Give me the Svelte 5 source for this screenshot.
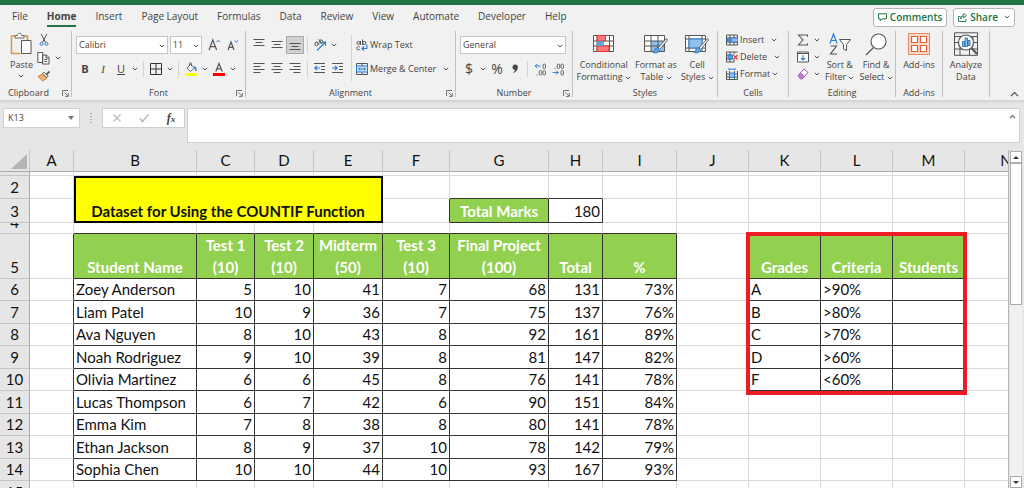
<script lang="ts">
  type Row = { n: number; height: number; cells?: Record<string, string | number> };

  const tabs = [
    'File',
    'Home',
    'Insert',
    'Page Layout',
    'Formulas',
    'Data',
    'Review',
    'View',
    'Automate',
    'Developer',
    'Help',
  ];

  const columns = [
    { id: 'A', width: 44 },
    { id: 'B', width: 123 },
    { id: 'C', width: 58 },
    { id: 'D', width: 59 },
    { id: 'E', width: 69 },
    { id: 'F', width: 67 },
    { id: 'G', width: 99 },
    { id: 'H', width: 54 },
    { id: 'I', width: 74 },
    { id: 'J', width: 72 },
    { id: 'K', width: 72 },
    { id: 'L', width: 72 },
    { id: 'M', width: 72 },
    { id: 'N', width: 0 },
  ];

  const students = [
    ['Zoey Anderson', 5, 10, 41, 7, 68, 131, '73%'],
    ['Liam Patel', 10, 9, 36, 7, 75, 137, '76%'],
    ['Ava Nguyen', 8, 10, 43, 8, 92, 161, '89%'],
    ['Noah Rodriguez', 9, 10, 39, 8, 81, 147, '82%'],
    ['Olivia Martinez', 6, 6, 45, 8, 76, 141, '78%'],
    ['Lucas Thompson', 6, 7, 42, 6, 90, 151, '84%'],
    ['Emma Kim', 7, 8, 38, 8, 80, 141, '78%'],
    ['Ethan Jackson', 8, 9, 37, 10, 78, 142, '79%'],
    ['Sophia Chen', 10, 10, 44, 10, 93, 167, '93%'],
  ];

  const grades = [
    ['A', '>90%'],
    ['B', '>80%'],
    ['C', '>70%'],
    ['D', '>60%'],
    ['F', '<60%'],
  ];

  const rows: Row[] = [
    { n: 1, height: 4 },
    { n: 2, height: 23, cells: { B: 'Dataset for Using the COUNTIF Function' } },
    { n: 3, height: 24, cells: { G: 'Total Marks', H: 180 } },
    { n: 4, height: 11 },
    {
      n: 5,
      height: 45,
      cells: {
        B: 'Student Name',
        C: 'Test 1\n(10)',
        D: 'Test 2\n(10)',
        E: 'Midterm\n(50)',
        F: 'Test 3\n(10)',
        G: 'Final Project\n(100)',
        H: 'Total',
        I: '%',
        K: 'Grades',
        L: 'Criteria',
        M: 'Students',
      },
    },
    ...students.map((student, i) => {
      const cells: Record<string, string | number> = {};
      student.forEach((value, c) => (cells['BCDEFGHI'[c]] = value));
      (grades[i] ?? []).forEach((value, c) => (cells['KL'[c]] = value));
      return { n: 6 + i, height: i % 2 ? 23 : 22, cells };
    }),
    { n: 15, height: 23 },
  ];

  // bordered ranges: G3:H3, B5:I14, K5:M10
  const boxed = (col: string, n: number) =>
    (n === 3 && (col === 'G' || col === 'H')) ||
    (n >= 5 && n <= 14 && col >= 'B' && col <= 'I') ||
    (n >= 5 && n <= 10 && col >= 'K' && col <= 'M');

  const next = (col: string) => String.fromCharCode(col.charCodeAt(0) + 1);
  const merged = (col: string, n: number) => (n === 2 && col >= 'C' && col <= 'E') || (n === 3 && col >= 'B' && col <= 'E');
  const isHead = (col: string, n: number) => boxed(col, n) && (n === 5 || (n === 3 && col === 'G'));
  const isNumber = (col: string, n: number) => boxed(col, n) && !isHead(col, n) && col >= 'C' && col <= 'I';
</script>

{#snippet chev()}
  <svg class="chev" viewBox="0 0 6 4" aria-hidden="true"><path d="M.8.8 3 3 5.2.8" fill="none" stroke="#555" /></svg>
{/snippet}

{#snippet launcher(label: string)}
  <button class="launcher" aria-label={label}>
    <svg width="7" height="7" viewBox="0 0 7 7" fill="none" stroke="#666" stroke-width=".9">
      <path d="M.5 6V.5H6M2.5 2.5l3.5 3.5M6.3 3v3.4H3" />
    </svg>
  </button>
{/snippet}

{#snippet lines(widths: number[], y: number, align: string)}
  <svg width="12" height="14" viewBox="0 0 12 14" stroke="#555" aria-hidden="true">
    {#each widths as w, i}
      {@const x = align === 'left' ? 0.5 : align === 'right' ? 11.5 - w : (12 - w) / 2}
      <path d="M{x} {y + i * 3 + 0.5}h{w}" />
    {/each}
  </svg>
{/snippet}

{#snippet brush()}
  <path d="M22.5 5.5 14 15l1.7 1.5L23.5 7Z" fill="#fff" stroke="#555" stroke-width=".9" />
  <path d="M13.8 15c-2-.4-3 .7-3.2 2.2-.2 1.2-1 1.8-2 2 2.6 1.5 6.600.8 7-2.700Z" fill="#5ba3de" stroke="#2c74b5" stroke-width=".8" />
{/snippet}

<div class="app">
  <div class="titlebar"></div>

  <nav class="tabs" aria-label="Ribbon tabs">
    {#each tabs as tab}
      <button class="tab" class:active={tab === 'Home'}>{tab}</button>
    {/each}
    <div class="actions">
      <button class="pill">
        <svg width="9" height="9" viewBox="0 0 9 9" fill="none" stroke="#217346"><path d="M.5.8h8v5H4L2.200 7.800v-2H.5Z" /></svg>
        Comments
      </button>
      <button class="pill">
        <svg width="9" height="9" viewBox="0 0 9 9" fill="none" stroke="#217346" stroke-width=".9">
          <path d="M2.500 3.500h-2v5h7.500V6M2.800 6c.2-2 1.200-2.800 3-2.800V5L8.500 2.600 5.800.6v1.300C3.800 2 2.800 3.800 2.800 6Z" />
        </svg>
        Share
        <svg class="chev share-chev" viewBox="0 0 6 4"><path d="M.8.8 3 3 5.2.8" fill="none" stroke="#217346" /></svg>
      </button>
    </div>
  </nav>

  <div class="ribbon">
    <section class="group">
      <div class="body clipboard">
        <button class="big">
          <svg width="22" height="24" viewBox="0 0 22 24" fill="none">
            <path d="M6 4H1.500v17.500h9M13 4h4.500v4" stroke="#e0924a" stroke-width="1.500" />
            <path d="M5 6V3.500h2.500C7.500.5 11.500.5 11.500 3.500H14V6Z" fill="#fff" stroke="#666" />
            <path d="M11.500 8.500h9.500v13h-9.500Z" fill="#fff" stroke="#555" />
          </svg>
          <span>Paste</span>
          {@render chev()}
        </button>
        <div class="stack">
          <button class="icon" aria-label="Cut">
            <svg width="12" height="14" viewBox="0 0 12 14" fill="none">
              <path d="M3.200 1 7.500 9.500M8.800 1 4.500 9.500" stroke="#555" />
              <circle cx="3.500" cy="10.800" r="1.500" stroke="#2b7cd3" /><circle cx="8.500" cy="10.800" r="1.500" stroke="#2b7cd3" />
            </svg>
          </button>
          <button class="icon split" aria-label="Copy">
            <svg width="13" height="14" viewBox="0 0 13 14" fill="#fff" stroke="#555">
              <path d="M.8 1.500h5v10h-5ZM5.500 4h4l2.500 2.500v6.500H5.500ZM9 4v3h3M7.300 8.500h3M7.300 10.500h3" />
            </svg>
            {@render chev()}
          </button>
          <button class="icon" aria-label="Format Painter">
            <svg width="14" height="12" viewBox="0 0 14 12">
              <path d="M5.500 4 1 6.500 5.500 11 10 8Z" fill="#f3b36b" stroke="#c76f1e" stroke-width=".8" />
              <path d="m5.500 3.500 1.500-1.200 4.200 3.500L10 7.500Z" fill="#fff" stroke="#555" stroke-width=".9" />
              <path d="M9 4 12 1.200l.8.8L10 5Z" fill="#555" stroke="#555" stroke-width=".6" />
            </svg>
          </button>
        </div>
      </div>
      <footer>Clipboard {@render launcher('Clipboard settings')}</footer>
    </section>

    <section class="group">
      <div class="body rows">
        <div class="line">
          <label class="select font-name">
            <select aria-label="Font name"><option>Calibri</option></select>{@render chev()}
          </label>
          <label class="select font-size">
            <select aria-label="Font size"><option>11</option></select>{@render chev()}
          </label>
          <button class="icon" aria-label="Increase font size">
            <svg width="13" height="14" viewBox="0 0 13 14" fill="none"><path d="m1 12 3.800-10L8.600 12M2.300 8.600h5" stroke="#555" stroke-width="1.200" /><path d="m8.500 4 1.700-1.700L12 4" stroke="#2b7cd3" /></svg>
          </button>
          <button class="icon" aria-label="Decrease font size">
            <svg width="13" height="14" viewBox="0 0 13 14" fill="none"><path d="m2 12 3-8 3 8M3 9.300h4" stroke="#555" stroke-width="1.200" /><path d="m8.500 2.500 1.700 1.700L12 2.500" stroke="#2b7cd3" /></svg>
          </button>
        </div>
        <div class="line">
          <button class="icon"><b>B</b></button>
          <button class="icon italic"><i>I</i></button>
          <button class="icon"><u>U</u></button>
          <button class="arrow" aria-label="Underline styles">{@render chev()}</button>
          <span class="rule"></span>
          <button class="icon" aria-label="Borders">
            <svg width="12" height="12" viewBox="0 0 12 12" fill="none" stroke="#333"><path d="M.5.5h11v11H.5ZM6 .5v11M.5 6h11" /></svg>
          </button>
          <button class="arrow" aria-label="Border styles">{@render chev()}</button>
          <span class="rule"></span>
          <button class="icon" aria-label="Fill colour">
            <svg width="14" height="14" viewBox="0 0 14 14" fill="none">
              <path d="M6.500 2.200 10.500 6 6.500 9.500 3 6.200ZM5.500 3.500V1.500c0-1 2-1 2 0V4" stroke="#555" stroke-width=".9" />
              <path d="M10 5c1.800.5 2 2.500 1.700 3.800" stroke="#2b7cd3" stroke-width="1.500" />
              <path d="M1 11h12v3H1Z" fill="#ff0" />
            </svg>
          </button>
          <button class="arrow" aria-label="Fill colours">{@render chev()}</button>
          <button class="icon" aria-label="Font colour">
            <svg width="14" height="14" viewBox="0 0 14 14" fill="none"><path d="m3.800 9.500 3.200-8 3.200 8M5 6.800h4" stroke="#555" stroke-width="1.200" /><path d="M1 11h12v3H1Z" fill="#f00" /></svg>
          </button>
          <button class="arrow" aria-label="Font colours">{@render chev()}</button>
        </div>
      </div>
      <footer>Font {@render launcher('Font settings')}</footer>
    </section>

    <section class="group">
      <div class="body alignment">
        <div class="rows">
          <div class="line">
            <button class="icon" aria-label="Top align">{@render lines([11, 7, 11], 1, 'center')}</button>
            <button class="icon" aria-label="Middle align">{@render lines([11, 7, 11], 3, 'center')}</button>
            <button class="icon pressed" aria-label="Bottom align">{@render lines([11, 7, 11], 5, 'center')}</button>
            <span class="rule"></span>
            <button class="icon" aria-label="Orientation">
              <svg width="14" height="14" viewBox="0 0 14 14" fill="none">
                <circle cx="3.500" cy="6" r="1.700" stroke="#555" /><path d="m3.800 3.500 2.500 3.200M5.500 1.200l3.500 4.500" stroke="#555" /><circle cx="8" cy="3.500" r="1.600" stroke="#555" />
                <path d="m4 12.500 8-8M9 4.200h3.500v3.500" stroke="#2b7cd3" stroke-width="1.200" />
              </svg>
            </button>
            <button class="arrow" aria-label="Orientations">{@render chev()}</button>
          </div>
          <div class="line">
            <button class="icon" aria-label="Align left">{@render lines([11, 7, 11, 7], 1, 'left')}</button>
            <button class="icon" aria-label="Centre">{@render lines([11, 7, 11, 7], 1, 'center')}</button>
            <button class="icon" aria-label="Align right">{@render lines([11, 7, 11, 7], 1, 'right')}</button>
            <span class="rule"></span>
            <button class="icon" aria-label="Decrease indent">
              <svg width="12" height="14" viewBox="0 0 12 14" fill="none"><path d="M0 1.500h11M7 4.500h4M7 7.500h4M0 10.500h11" stroke="#555" /><path d="M6 6H.8M3 3.800.8 6 3 8.200" stroke="#2b7cd3" stroke-width="1.200" /></svg>
            </button>
            <button class="icon" aria-label="Increase indent">
              <svg width="12" height="14" viewBox="0 0 12 14" fill="none"><path d="M0 1.500h11M7 4.500h4M7 7.500h4M0 10.500h11" stroke="#555" /><path d="M0 6h5.200M3 3.800 5.200 6 3 8.200" stroke="#2b7cd3" stroke-width="1.200" /></svg>
            </button>
          </div>
        </div>
        <span class="rule tall"></span>
        <div class="rows">
          <button class="row-button">
            <svg width="12" height="12" viewBox="0 0 12 12" fill="none">
              <circle cx="2.500" cy="4" r="1.500" stroke="#555" /><path d="M4.500 2v4M6.500.5V6M3.800 8C2 7 .8 8 .8 9.300s1.500 2.200 3 1.200" stroke="#555" /><circle cx="8.300" cy="4" r="1.600" stroke="#555" />
              <path d="M10.800 5.500v4H6M8 7.500l-2 2 2 2" stroke="#2b7cd3" stroke-width="1.200" />
            </svg>
            Wrap Text
          </button>
          <button class="row-button">
            <svg width="12" height="12" viewBox="0 0 12 12" fill="none">
              <path d="M.5.5h11v11H.5ZM6 .5v2.500M6 9v2.500" stroke="#555" /><path d="M.5 3h11v6H.5Z" fill="#cfe4f6" stroke="#2b7cd3" />
              <path d="M2.500 6h7M4 4.500 2.500 6 4 7.500M8 4.500 9.500 6 8 7.500" stroke="#2b7cd3" />
            </svg>
            Merge &amp; Center
            <span class="far">{@render chev()}</span>
          </button>
        </div>
      </div>
      <footer>Alignment {@render launcher('Alignment settings')}</footer>
    </section>

    <section class="group">
      <div class="body rows">
        <div class="line">
          <label class="select number-format">
            <select aria-label="Number format"><option>General</option></select>{@render chev()}
          </label>
        </div>
        <div class="line symbols">
          <button class="icon">$</button>
          <button class="arrow" aria-label="Currencies">{@render chev()}</button>
          <button class="icon">%</button>
          <button class="icon" aria-label="Comma style">
            <svg width="8" height="12" viewBox="0 0 8 12"><path d="M4 1.500c2 0 3 1.200 2.800 3.200C6.600 7.500 4.500 9.500 1.800 10c1.600-1.300 2.200-2.200 2.200-3.300C2.300 6.800 1.500 5.500 1.500 4.200S2.500 1.500 4 1.500Z" fill="#444" /></svg>
          </button>
          <span class="rule"></span>
          <button class="icon" aria-label="Increase decimal">
            <svg width="13" height="13" viewBox="0 0 13 13" fill="none">
              <path d="M6.500 3H1.200M3.200 1l-2 2 2 2" stroke="#2b7cd3" /><g stroke="#555" stroke-width=".9"><rect x="9" y="1" width="2.500" height="4.500" rx="1.200" /><rect x="5.200" y="7.500" width="2.500" height="4.500" rx="1.200" /><rect x="9" y="7.500" width="2.500" height="4.500" rx="1.200" /><path d="M2.500 12h1" /></g>
            </svg>
          </button>
          <button class="icon" aria-label="Decrease decimal">
            <svg width="13" height="13" viewBox="0 0 13 13" fill="none">
              <path d="M.8 9.500h5.400m-2-2 2 2-2 2" stroke="#2b7cd3" /><g stroke="#555" stroke-width=".9"><rect x="5.200" y="1" width="2.500" height="4.500" rx="1.200" /><rect x="9" y="1" width="2.500" height="4.500" rx="1.200" /><rect x="9" y="7.500" width="2.500" height="4.500" rx="1.200" /><path d="M2.500 5.500h1" /></g>
            </svg>
          </button>
        </div>
      </div>
      <footer>Number {@render launcher('Number settings')}</footer>
    </section>

    <section class="group">
      <div class="body bigs">
        <button class="big">
          <svg width="24" height="22" viewBox="0 0 24 22" fill="none">
            <path d="M1.500 2.500h20v16h-20Z" fill="#fff" /><path d="M1.500 2.500h20v16h-20ZM1.500 8h20M1.500 13h20M5 2.500v16M11 2.500v16M17.500 2.500v16" stroke="#555" />
            <path d="M5 2.500h8.500V8H5ZM5 13h12v5.500H5Z" fill="#f77" stroke="#e33" /><path d="M5 8h6v5H5Z" fill="#5ba3de" />
          </svg>
          <span>Conditional<br />Formatting {@render chev()}</span>
        </button>
        <button class="big">
          <svg width="24" height="22" viewBox="0 0 24 22" fill="none">
            <path d="M.5 2.500h20v16H.5Z" fill="#fff" /><path d="M7 8h13.500v10.500H7Z" fill="#8fc0ea" />
            <path d="M.5 2.500h20v16H.5ZM.5 8h20M.5 13h20M7 2.500v16M14 2.500v16" stroke="#555" />
            {@render brush()}
          </svg>
          <span>Format as<br />Table {@render chev()}</span>
        </button>
        <button class="big">
          <svg width="24" height="22" viewBox="0 0 24 22" fill="none">
            <path d="M.5 2.500h20v16H.5Z" fill="#fff" /><path d="M.5 2.500h20v16H.5ZM.5 6h20M.5 15h20M4 2.500v16M17 2.500v16" stroke="#555" />
            <path d="M4 6h13v9H4Z" fill="#8fc0ea" stroke="#2b7cd3" />
            {@render brush()}
          </svg>
          <span>Cell<br />Styles {@render chev()}</span>
        </button>
      </div>
      <footer>Styles</footer>
    </section>

    <section class="group">
      <div class="body cells">
        <button class="row-button">
          <svg width="12" height="12" viewBox="0 0 12 12" fill="none"><path d="M.5 1v10h11V1ZM.5 4h11M.5 8h11M4 1v10M8 1v10" stroke="#555" /><path d="M4.500 4H12v4H4.500Z" fill="#8fc0ea" stroke="#2b7cd3" /><path d="M6 6H1M3 4 1 6l2 2" stroke="#2b7cd3" stroke-width="1.200" /></svg>
          Insert <span class="far">{@render chev()}</span>
        </button>
        <button class="row-button">
          <svg width="12" height="12" viewBox="0 0 12 12" fill="none"><path d="M.5 1v10h8M.5 1h11M.5 4h6M.5 8h6M4 1v10M8 1v2M8 9v2" stroke="#555" /><path d="M2 4h4.500v4H2Z" fill="#5ba3de" stroke="#2b7cd3" /><path d="m7.500 4 4 4.500M11.500 4l-4 4.500" stroke="#e33" stroke-width="1.200" /></svg>
          Delete <span class="far">{@render chev()}</span>
        </button>
        <button class="row-button">
          <svg width="12" height="12" viewBox="0 0 12 12" fill="none"><path d="M.5 3v8.500h11V3M.5 6h11M.5 9h11M3.500 3v8.500M8.500 3v8.500" stroke="#555" /><path d="M3.500 5h5v4.500h-5Z" fill="#8fc0ea" stroke="#2b7cd3" /><path d="M3 .2v2M9 .2v2M3 1.200h6" stroke="#2b7cd3" /></svg>
          Format {@render chev()}
        </button>
      </div>
      <footer>Cells</footer>
    </section>

    <section class="group">
      <div class="body editing">
        <div class="cells">
          <button class="row-button" aria-label="AutoSum">
            <svg width="12" height="12" viewBox="0 0 12 12" fill="none"><path d="M10.500 2.800V1H1.500l4.500 5-4.500 5h9V9.200" stroke="#555" stroke-width="1.100" /></svg>
            {@render chev()}
          </button>
          <button class="row-button" aria-label="Fill">
            <svg width="12" height="12" viewBox="0 0 12 12" fill="none"><path d="M.5 1h11v10H.5Z" fill="#fff" stroke="#555" /><path d="M.5 2.500h11" stroke="#555" /><path d="M6 4v5M4 7l2 2 2-2" stroke="#2b7cd3" stroke-width="1.100" /></svg>
            {@render chev()}
          </button>
          <button class="row-button" aria-label="Clear">
            <svg width="12" height="12" viewBox="0 0 12 12" fill="none"><path d="m1 7.500 6-6.500 4 3.500L5.200 11H3.500Z" fill="#fff" stroke="#a24fb5" /><path d="m1 7.500 2.700-3 4 3.700L5.200 11H3.500Z" fill="#b878c8" /></svg>
            {@render chev()}
          </button>
        </div>
        <button class="big">
          <svg width="24" height="24" viewBox="0 0 24 24" fill="none">
            <path d="M2 11.500 5.500 2 9 11.500M3.200 8.500h4.600" stroke="#2b7cd3" stroke-width="1.200" /><path d="M2.500 14h6l-6 8h6.500" stroke="#555" stroke-width="1.200" />
            <path d="M11.500 7.500h11L18.500 12.500v6l-3-1.500v-4.500Z" fill="#fff" stroke="#555" />
          </svg>
          <span>Sort &amp;<br />Filter {@render chev()}</span>
        </button>
        <button class="big">
          <svg width="24" height="24" viewBox="0 0 24 24" fill="none"><circle cx="14.500" cy="9.500" r="7.500" fill="#fff" stroke="#555" stroke-width="1.100" /><path d="m9.500 15.500-7.500 7.500" stroke="#555" stroke-width="1.300" /></svg>
          <span>Find &amp;<br />Select {@render chev()}</span>
        </button>
      </div>
      <footer>Editing</footer>
    </section>

    <section class="group">
      <div class="body bigs">
        <button class="big">
          <svg width="24" height="24" viewBox="0 0 24 24" fill="none"><path d="M1.500 1.500h21v21h-21Z" fill="#fbd9c8" stroke="#e08a64" /><path d="M4.500 4.500h6v6h-6ZM13.500 4.500h6v6h-6ZM4.500 13.500h6v6h-6ZM13.500 13.500h6v6h-6Z" fill="#fff" stroke="#d9643a" stroke-width="1.200" /></svg>
          <span>Add-ins</span>
        </button>
      </div>
      <footer>Add-ins</footer>
    </section>

    <section class="group">
      <div class="body bigs">
        <button class="big">
          <svg width="24" height="24" viewBox="0 0 24 24" fill="none">
            <path d="M.5.8h23v22.500H.5ZM.5 4.500h23M.5 10.500h23M.5 17h23M6 4.500v19M15.500 17v6.500M19 4.500v6" stroke="#555" />
            <circle cx="12" cy="10.500" r="7.500" fill="#fff" stroke="#555" stroke-width="1.200" />
            <path d="M8.500 9.500h2v5h-2ZM11 6h2.500v8.500H11ZM14 8.500h2v5h-2Z" fill="#8fc0ea" stroke="#2b6fb0" stroke-width=".9" />
            <path d="m17.500 16 5.500 6" stroke="#555" stroke-width="2" />
          </svg>
          <span>Analyze<br />Data</span>
        </button>
      </div>
      <footer></footer>
    </section>

    <button class="collapse" aria-label="Collapse ribbon">
      <svg width="9" height="6" viewBox="0 0 9 6"><path d="m1 5 3.500-3.500L8 5" fill="none" stroke="#555" stroke-width="1.200" /></svg>
    </button>
  </div>

  <div class="formula-bar">
    <div class="name-box">
      <input aria-label="Name box" value="K13" />
      <svg width="6" height="4" viewBox="0 0 6 4"><path d="M0 0h6L3 4Z" fill="#777" /></svg>
    </div>
    <svg class="dots" width="2" height="10" viewBox="0 0 2 10" fill="#aaa"><path d="M0 0h2v1H0ZM0 3h2v1H0ZM0 6h2v1H0ZM0 9h2v1H0Z" /></svg>
    <div class="fx">
      <button aria-label="Cancel"><svg width="10" height="10" viewBox="0 0 10 10"><path d="m1.500 1.500 7 7M8.500 1.500l-7 7" stroke="#bbb" stroke-width="1.300" /></svg></button>
      <button aria-label="Enter"><svg width="10" height="10" viewBox="0 0 10 10"><path d="m.8 5.500 2.700 3L9.500 1.500" fill="none" stroke="#bbb" stroke-width="1.500" /></svg></button>
      <button aria-label="Insert function"><i>f</i><i class="small">x</i></button>
    </div>
    <div class="formula">
      <input aria-label="Formula" />
      <svg width="7" height="5" viewBox="0 0 7 5"><path d="m1 4 2.500-2.500L6 4" fill="none" stroke="#777" stroke-width="1.300" /></svg>
    </div>
  </div>

  <main class="sheet">
    <div class="viewport">
      <table>
        <colgroup>
          <col class="row-col" />
          {#each columns as col}
            <col style={col.width ? `width: ${col.width}px` : undefined} />
          {/each}
        </colgroup>
        <thead>
          <tr>
            <th class="corner" aria-label="Select all"><svg width="16" height="15" viewBox="0 0 16 15"><path d="M16 0v15H0Z" fill="#b4b4b4" /></svg></th>
            {#each columns as col}
              <th scope="col">{col.id}</th>
            {/each}
          </tr>
        </thead>
        <tbody>
          {#each rows as row}
            <tr style={`--h: ${row.height - 1}px`}>
              <th scope="row"><div class="cell">{row.n > 1 ? row.n : ''}</div></th>
              {#each columns as { id }}
                {#if id === 'B' && row.n === 2}
                  <td class="title" colspan="4" rowspan="2">{row.cells?.B}</td>
                {:else if !merged(id, row.n)}
                  <td
                    class:dark-right={boxed(id, row.n) || boxed(next(id), row.n)}
                    class:dark-bottom={boxed(id, row.n) || boxed(id, row.n + 1)}
                    class:head={isHead(id, row.n)}
                    class:number={isNumber(id, row.n)}
                    class:anchor={id === 'K' && row.n === 5}
                  >
                    <div class="cell">{row.cells?.[id] ?? ''}</div>
                    {#if id === 'K' && row.n === 5}
                      <div class="highlight"></div>
                    {/if}
                  </td>
                {/if}
              {/each}
            </tr>
          {/each}
        </tbody>
      </table>
    </div>
    <div class="scrollbar">
      <button aria-label="Scroll up"><svg width="6" height="3" viewBox="0 0 6 3"><path d="M0 3h6L3 0Z" fill="#333" /></svg></button>
      <div class="thumb"></div>
      <div class="track"></div>
      <button aria-label="Scroll down"><svg width="6" height="3" viewBox="0 0 6 3"><path d="M0 0h6L3 3Z" fill="#333" /></svg></button>
    </div>
  </main>
</div>

<style>
  :global(body) {
    overflow: hidden;
  }

  .app {
    display: flex;
    flex-direction: column;
    height: 100vh;
    background: #e6e6e6;
    color: #444;
    font-family: 'Open Sans', 'Noto Sans', sans-serif;
    font-size: 9px;
    line-height: 12px;
  }

  .app * {
    box-sizing: border-box;
  }

  svg {
    display: block;
    flex: none;
  }

  button,
  input,
  select {
    margin: 0;
    padding: 0;
    border: 0;
    border-radius: 0;
    background: none;
    color: inherit;
    font: inherit;
    white-space: nowrap;
  }

  .chev {
    width: 6px;
    height: 4px;
  }

  .titlebar {
    flex: none;
    height: 5px;
    background: #217346;
  }

  /* tabs */
  .tabs {
    display: flex;
    flex: none;
    align-items: center;
    height: 24px;
    padding: 0 9px 0 12px;
    gap: 19px;
    background: #f1f1f1;
    font-size: 10px;
  }

  .tab {
    height: 20px;
    border-bottom: 2px solid transparent;
  }

  .tab.active {
    border-color: #217346;
    font-weight: 700;
  }

  .actions {
    display: flex;
    gap: 6px;
    margin-left: auto;
  }

  .pill {
    display: flex;
    align-items: center;
    gap: 3px;
    height: 19px;
    padding: 0 4px;
    border: 1px solid #b5b5b5;
    border-radius: 3px;
    background: #fff;
    color: #217346;
    font-weight: 600;
  }

  .share-chev {
    margin-left: 3px;
  }

  /* ribbon */
  .ribbon {
    display: grid;
    flex: none;
    grid-template-columns: 72px 174px 210px 117px 145px 71px 107px 47px 47px 1fr;
    height: 71px;
    background: #f1f1f1;
  }

  .group {
    display: flex;
    flex-direction: column;
    margin: 2px 0 3px;
    border-right: 1px solid #c0c0c0;
  }

  .body {
    flex: 1;
  }

  footer {
    position: relative;
    height: 12px;
    margin-bottom: -2px;
    text-align: center;
  }

  .group:first-child footer {
    padding-right: 14px;
  }

  .launcher {
    position: absolute;
    right: 2px;
    top: 3px;
  }

  .clipboard {
    display: flex;
    gap: 4px;
    padding-left: 10px;
  }

  .stack {
    display: flex;
    flex-direction: column;
    justify-content: space-between;
    padding: 1px 0 3px;
    align-items: flex-start;
  }

  .big {
    display: flex;
    flex-direction: column;
    align-items: center;
    justify-content: flex-start;
    gap: 3px;
    text-align: center;
  }

  .big span .chev {
    display: inline-block;
    vertical-align: middle;
  }

  .clipboard .big {
    padding-top: 1px;
  }

  .bigs {
    display: flex;
    justify-content: center;
    gap: 4px;
    padding-top: 1px;
  }

  .bigs .big > svg,
  .editing .big > svg {
    height: 24px;
  }

  .rows {
    display: flex;
    flex-direction: column;
    gap: 6px;
    padding: 5px 4px 0;
  }

  .line {
    display: flex;
    align-items: center;
    height: 18px;
  }

  .icon {
    display: flex;
    align-items: center;
    justify-content: center;
    width: 18px;
    height: 18px;
    font-size: 11px;
  }

  .icon.split {
    gap: 5px;
  }

  .italic {
    font-family: 'Liberation Serif', serif;
  }

  .stack .icon {
    width: auto;
    min-width: 14px;
    height: 16px;
  }

  .icon.pressed {
    border: 1px solid #aaa;
    background: #d2d0ce;
  }

  .arrow {
    display: flex;
    align-items: center;
    justify-content: center;
    width: 10px;
    height: 18px;
  }

  .rule {
    width: 1px;
    height: 16px;
    margin: 0 3px;
    background: #d2d2d2;
  }

  .rule.tall {
    height: 46px;
    margin: 4px 0 0;
  }

  .select {
    position: relative;
    height: 18px;
    border: 1px solid #c6c6c6;
    background: #fff;
  }

  .select select {
    width: 100%;
    height: 16px;
    padding-left: 2px;
    appearance: none;
  }

  .select .chev {
    position: absolute;
    right: 2px;
    top: 7px;
    pointer-events: none;
  }

  .font-name {
    width: 93px;
    margin-right: 2px;
  }

  .font-size {
    width: 33px;
    margin-right: 3px;
  }

  .number-format {
    width: 106px;
  }

  .symbols .icon {
    font-size: 14px;
  }

  .alignment {
    display: flex;
  }

  .row-button {
    display: flex;
    align-items: center;
    gap: 2px;
    height: 18px;
  }

  .far {
    margin-left: 5px;
  }

  .cells {
    display: flex;
    flex-direction: column;
    align-items: flex-start;
    padding-left: 8px;
  }

  .cells .row-button {
    height: 17px;
  }

  .editing {
    display: flex;
    gap: 5px;
    padding-top: 1px;
  }

  .editing .cells .row-button {
    gap: 5px;
  }

  .editing .cells {
    margin-top: -1px;
  }

  .collapse {
    align-self: end;
    justify-self: end;
    padding: 0 5px 3px;
  }

  /* formula bar */
  .formula-bar {
    display: flex;
    flex: none;
    align-items: flex-start;
    height: 50px;
    padding: 8px 4px 0 3px;
    background: linear-gradient(#d0d0d0, #e6e6e6 4px);
  }

  .name-box,
  .fx,
  .formula {
    display: flex;
    align-items: center;
    height: 20px;
    border: 1px solid #d0d0d0;
    background: #fff;
  }

  .name-box {
    width: 77px;
    padding: 0 5px 0 4px;
  }

  .name-box input {
    flex: 1;
    min-width: 0;
  }

  .dots {
    margin: 5px 10px 0;
  }

  .fx {
    width: 83px;
    margin-right: 2px;
    justify-content: space-around;
  }

  .fx i {
    font: italic 700 12px 'Liberation Serif', serif;
  }

  .fx .small {
    font-size: 9px;
  }

  .formula {
    flex: 1;
    align-items: flex-start;
    height: 35px;
    padding: 5px 3px;
  }

  .formula input {
    flex: 1;
  }

  /* worksheet */
  .sheet {
    display: flex;
    flex: 1;
    min-height: 0;
  }

  .viewport {
    flex: 1;
    min-width: 0;
    overflow: hidden;
    border-right: 1px solid #b5b5b5;
    background: #fff;
  }

  table {
    width: 100%;
    min-width: 1048px;
    border-collapse: separate;
    border-spacing: 0;
    table-layout: fixed;
    color: #111;
    font-family: Lato, 'Liberation Sans', sans-serif;
    font-size: 15px;
    font-variant-ligatures: none;
    line-height: 22px;
  }

  .row-col {
    width: 30px;
  }

  th,
  td {
    padding: 0;
    border-right: 1px solid #d9d9d9;
    border-bottom: 1px solid #d9d9d9;
  }

  th {
    background: #e6e6e6;
    font-weight: 400;
  }

  thead th {
    height: 22px;
    border-right-color: #c4c4c4;
    border-bottom-color: #ababab;
    line-height: 21px;
  }

  tbody th {
    border-right-color: #ababab;
    border-bottom-color: #c4c4c4;
  }

  .corner svg {
    margin: 2px 2px 0 auto;
  }

  .cell {
    display: flex;
    align-items: flex-end;
    height: var(--h);
    padding: 0 2px;
    overflow: hidden;
    white-space: pre;
  }

  tbody th .cell,
  .head .cell {
    justify-content: center;
    text-align: center;
  }

  .number .cell {
    justify-content: flex-end;
  }

  .dark-right {
    border-right-color: #333;
  }

  .dark-bottom {
    border-bottom-color: #333;
  }

  .head {
    background: #92d050;
    color: #fff;
    font-weight: 700;
  }

  .title {
    background: #ff0;
    outline: 2px solid #000;
    outline-offset: -2px;
    font-weight: 700;
    text-align: center;
    vertical-align: bottom;
  }

  .anchor {
    position: relative;
  }

  .highlight {
    position: absolute;
    z-index: 1;
    left: -3px;
    top: -2px;
    width: 221px;
    height: 163px;
    border: 4px solid #ed1c24;
    pointer-events: none;
  }

  /* scrollbar */
  .scrollbar {
    display: flex;
    flex-direction: column;
    width: 15px;
    padding: 1px 2px 0 1px;
    background: #e6e6e6;
  }

  .scrollbar button {
    display: flex;
    align-items: center;
    justify-content: center;
    height: 12px;
    border: 1px solid #ababab;
    background: #fff;
  }

  .thumb {
    height: 142px;
    border: 1px solid #ababab;
    background: #fff;
  }

  .track {
    flex: 1;
    background: #f0f0f0;
  }
</style>
